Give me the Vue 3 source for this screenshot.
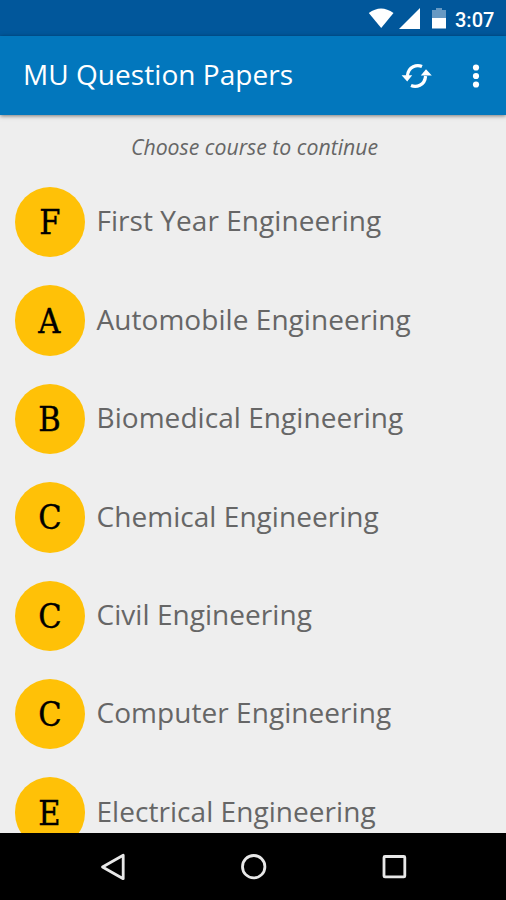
<script setup>
const courses = [
  'First Year Engineering',
  'Automobile Engineering',
  'Biomedical Engineering',
  'Chemical Engineering',
  'Civil Engineering',
  'Computer Engineering',
  'Electrical Engineering',
]
</script>

<template>
  <div class="screen">
    <div class="status">
      <svg class="wifi" width="26" height="21" viewBox="0 0 26 21"><path d="M.8 5Q13-4.200 25.500 5L13.200 20Z" /></svg>
      <svg class="signal" width="21" height="21" viewBox="0 0 21 21"><path d="M21 0V21H0Z" /></svg>
      <svg class="battery" width="14" height="21" viewBox="0 0 14 21">
        <path class="empty" d="M4 0h6v2h4v8.500H0V2h4Z" />
        <path d="M0 10h14v10.500H0Z" />
      </svg>
      <span class="clock">3:07</span>
    </div>
    <header class="bar">
      <h1>MU Question Papers</h1>
      <svg class="sync" width="32" height="26" viewBox="0 0 32 26">
        <g class="arc">
          <path d="M21 3.500C16 1.300 7.200 3.200 6.400 13" />
          <path d="M10 22.500C15 24.700 23.800 22.800 24.600 13" />
        </g>
        <path d="M.6 12.200H11.200L6.200 18.600Z" />
        <path d="M19.800 12.400H30.800L25 6.200Z" />
      </svg>
      <svg class="more" width="8" height="24" viewBox="0 0 8 24">
        <circle cx="4" cy="3.500" r="3.100" /><circle cx="4" cy="12" r="3.100" /><circle cx="4" cy="20.500" r="3.100" />
      </svg>
    </header>
    <main>
      <p class="hint"><span>Choose course to continue</span></p>
      <ul>
        <li v-for="course in courses" :key="course">
          <span class="avatar"><span class="letter">{{ course[0] }}</span></span>
          <span class="name">{{ course }}</span>
        </li>
      </ul>
    </main>
    <nav>
      <svg width="28" height="30" viewBox="0 0 28 30"><path d="M24.200 3.300V26.700L3.500 15Z" /></svg>
      <svg width="28" height="30" viewBox="0 0 28 30"><circle cx="13.700" cy="14.700" r="11.200" /></svg>
      <svg width="28" height="30" viewBox="0 0 28 30"><rect x="4" y="4.500" width="20.800" height="20.400" rx="1" /></svg>
    </nav>
  </div>
</template>

<style>
body { margin: 0; overflow: hidden; }
</style>

<style scoped>
.screen {
  width: 506px;
  height: 900px;
  display: flex;
  flex-direction: column;
  overflow: hidden;
  background: #eee;
  font-family: "Open Sans", sans-serif;
}
.status {
  height: 36px;
  flex: none;
  box-sizing: border-box;
  padding: 0 11px 0 0;
  display: flex;
  align-items: center;
  justify-content: flex-end;
  background: #01579b;
  fill: #fff;
}
.signal { margin-left: 5px; }
.battery { margin-left: 12px; }
.empty { fill: #6799c3; }
.clock {
  width: 40px;
  margin-left: 9px;
  padding-top: 3px;
  font: 500 20px/36px Roboto, sans-serif;
  color: #fff;
  white-space: nowrap;
}
.bar {
  height: 79px;
  flex: none;
  box-sizing: border-box;
  padding: 0 26px 0 23px;
  display: flex;
  align-items: center;
  background: #0277bd;
  box-shadow: 0 1px 4px rgba(0, 0, 0, .5);
  z-index: 1;
  fill: #fff;
}
h1 {
  flex: 1;
  margin: 0;
  padding-bottom: 4px;
  font-size: 28px;
  line-height: 74px;
  font-weight: 400;
  letter-spacing: .05px;
  color: #fff;
  white-space: nowrap;
}
.arc { fill: none; stroke: #fff; stroke-width: 3.200; }
.more { margin-left: 39px; }
main { flex: 1; min-height: 0; overflow: hidden; }
.hint {
  margin: 0;
  padding: 15px 0 0 3px;
  height: 43px;
  text-align: center;
  font-size: 21.250px;
  line-height: 34px;
  font-style: italic;
  color: #666;
}
ul { margin: 0; padding: 0; list-style: none; }
li {
  height: 98.400px;
  box-sizing: border-box;
  padding: 0 0 0 14.500px;
  display: flex;
  align-items: center;
}
.avatar {
  width: 70.500px;
  height: 70.500px;
  flex: none;
  border-radius: 50%;
  background: #ffc107;
  display: flex;
  align-items: center;
  justify-content: center;
}
.letter {
  font: 34px/70px "DejaVu Serif", serif;
  color: #000;
  transform: scaleX(.9);
  -webkit-text-stroke: .4px #000;
}
.name {
  margin-left: 11.500px;
  padding-bottom: 3.600px;
  font-size: 28px;
  line-height: 40px;
  letter-spacing: .05px;
  color: #666;
  white-space: nowrap;
}
nav {
  height: 67px;
  flex: none;
  box-sizing: border-box;
  padding: 0 98px 0 99px;
  display: flex;
  align-items: center;
  justify-content: space-between;
  background: #000;
}
nav svg { fill: none; stroke: #e8e8e8; stroke-width: 2.800; stroke-linejoin: round; }
</style>
